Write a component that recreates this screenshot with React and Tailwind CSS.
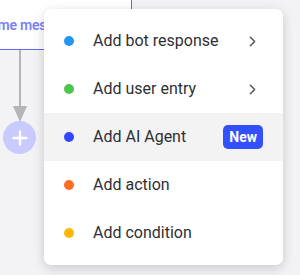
import { ChevronRight } from "lucide-react";

const ITEMS = [
  { label: "Add bot response", dot: "bg-[#2196f3]", sub: true },
  { label: "Add user entry", dot: "bg-[#4cc54c]", sub: true },
  { label: "Add AI Agent", dot: "bg-[#3345ff]", badge: "New", active: true },
  { label: "Add action", dot: "bg-[#ff6d24]" },
  { label: "Add condition", dot: "bg-[#ffb700]" },
];

function MenuRow({ item }) {
  return (
    <div className={`flex h-12 items-center pl-5 pr-5 ${item.active ? "bg-[#f3f3f4]" : ""}`}>
      <span className={`h-[10px] w-[10px] rounded-full ${item.dot}`} />
      <span className="ml-[19px] flex-1 text-[16px] text-[#2f2f33]">{item.label}</span>
      {item.sub && <ChevronRight size={17} strokeWidth={2.2} className="mr-[2px] text-[#555]" />}
      {item.badge && (
        <span className="flex h-6 items-center rounded-[5px] bg-[#3350ff] px-[6px] text-[14px] font-bold text-white">
          {item.badge}
        </span>
      )}
    </div>
  );
}

export default function App() {
  return (
    <div className="relative h-[275px] w-[300px] overflow-hidden bg-[#f3f3f5] font-['Roboto',sans-serif]">
      {/* node card */}
      <div className="absolute left-[-80px] top-[-21px] flex h-[71px] w-[212px] items-end rounded-[8px] border border-[#5b6cff] bg-white pb-[13px]">
        <span className="whitespace-nowrap pl-[39px] text-[14px] font-semibold tracking-[-0.2px] text-[#7a80f7]">Welcome message</span>
      </div>

      {/* connector */}
      <div className="absolute left-[19px] top-[50px] h-[62px] w-[2px] bg-[#b5b5b8]" />
      <svg className="absolute left-[13px] top-[106px]" width="14" height="16" viewBox="0 0 14 16">
        <polygon points="0,0 14,0 7,16" fill="#b5b5b8" />
      </svg>
      <div className="absolute left-[3px] top-[121px] flex h-[33px] w-[33px] items-center justify-center rounded-full bg-[#c9cbff]">
        <svg width="16" height="16" viewBox="0 0 16 16">
          <path d="M8 1.5v13M1.5 8h13" stroke="white" strokeWidth="2.4" strokeLinecap="round" />
        </svg>
      </div>

      {/* menu */}
      <div className="absolute left-[44px] top-[9px] w-[239px] rounded-[7px] bg-white py-2 shadow-[0_3px_12px_rgba(0,0,0,0.18)]">
        {ITEMS.map((it) => (
          <MenuRow key={it.label} item={it} />
        ))}
      </div>
    </div>
  );
}
